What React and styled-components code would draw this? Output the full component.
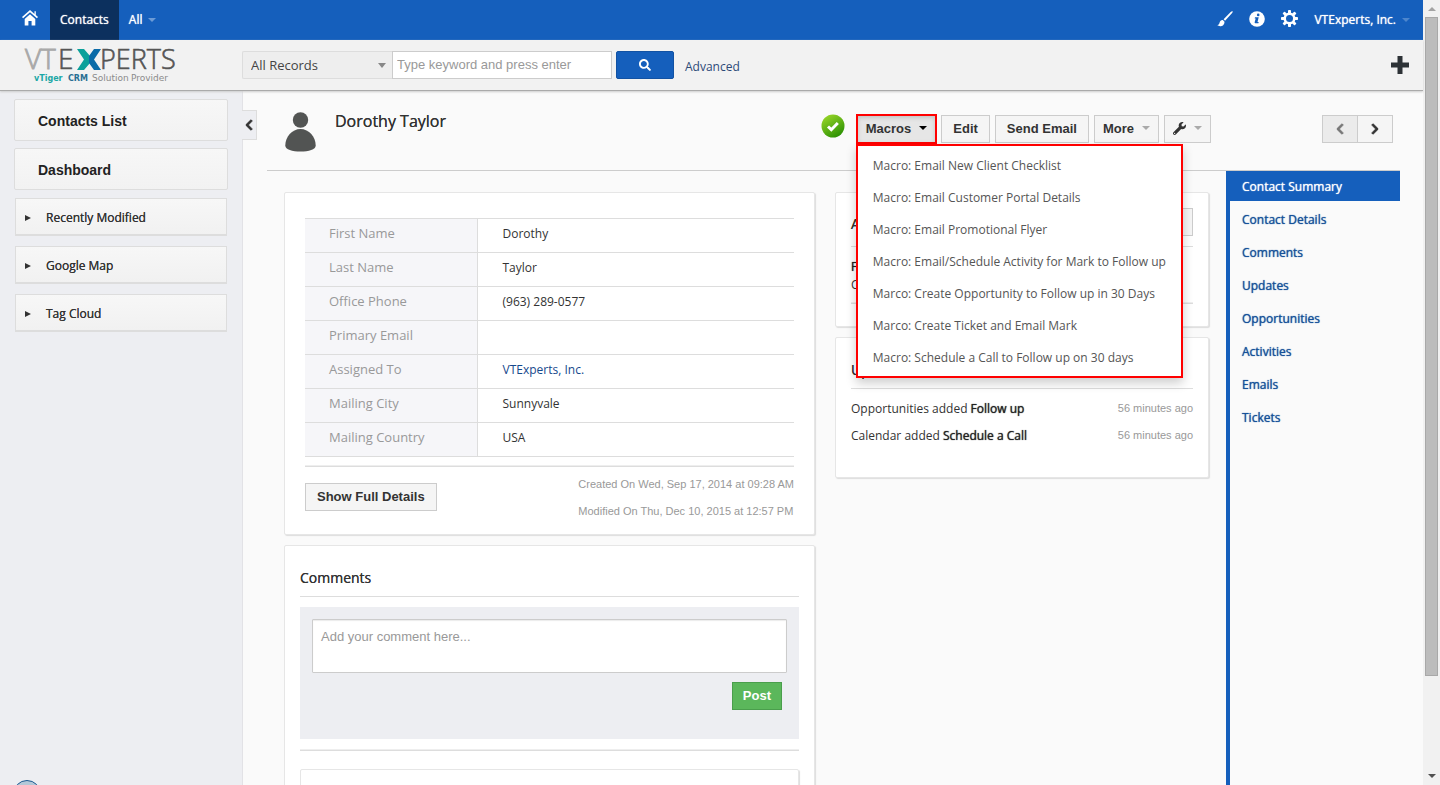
import styled, { createGlobalStyle, css } from "styled-components";
import { FaSearch, FaWrench, FaChevronLeft, FaChevronRight } from "react-icons/fa";

const macros = [
  "Macro: Email New Client Checklist",
  "Macro: Email Customer Portal Details",
  "Macro: Email Promotional Flyer",
  "Macro: Email/Schedule Activity for Mark to Follow up",
  "Marco: Create Opportunity to Follow up in 30 Days",
  "Marco: Create Ticket and Email Mark",
  "Macro: Schedule a Call to Follow up on 30 days",
];

const fields = [
  ["First Name", "Dorothy"],
  ["Last Name", "Taylor"],
  ["Office Phone", "(963) 289-0577"],
  ["Primary Email", ""],
  ["Assigned To", "VTExperts, Inc."],
  ["Mailing City", "Sunnyvale"],
  ["Mailing Country", "USA"],
];

const tabs = [
  "Contact Summary",
  "Contact Details",
  "Comments",
  "Updates",
  "Opportunities",
  "Activities",
  "Emails",
  "Tickets",
];

const updates = [
  ["Opportunities", "Follow up"],
  ["Calendar", "Schedule a Call"],
];

const HomeIcon = () => (
  <svg width="16" height="16" viewBox="0 0 16 16" fill="#fff">
    <path d="M8 0 0 7l1.100 1.200L8 2.300l6.900 5.900L16 7l-2.200-1.900V1.200h-1.300v2.700z" />
    <path d="M8 4.300 2.700 8.900v6.600h3.700V11h3.200v4.500h3.700V8.900z" />
  </svg>
);

const BrushIcon = () => (
  <svg width="16" height="16" viewBox="0 0 16 16" fill="#fff">
    <path d="M15.600.3c-.5-.4-1.300.1-1.900.7L6.600 8.300l1.500 1.500 6.800-7.500c.5-.6 1.100-1.600.7-2z" />
    <path d="M5.800 9c-1.500-.3-2.800.7-3.100 2.300-.3 1.500-.9 2.500-2.400 3 2.200 1.600 7.300 1.200 7.200-3.600z" />
  </svg>
);

const InfoIcon = () => (
  <svg width="16" height="16" viewBox="0 0 16 16">
    <circle cx="8" cy="8" r="7.800" fill="#fff" />
    <circle cx="9.200" cy="3.900" r="1.300" fill="#155fbc" />
    <path d="M6 6.300h3.700L8.500 11h1.200l-.3 1.200H6.300c-.6 0-.8-.5-.6-1.100l1-3.700H5.700z" fill="#155fbc" />
  </svg>
);

const GearIcon = () => (
  <svg width="17" height="17" viewBox="0 0 17 17">
    <g fill="#fff">
      {[0, 45, 90, 135].map((angle) => (
        <rect key={angle} x="7" y="0" width="3" height="17" rx=".8" transform={`rotate(${angle} 8.500 8.500)`} />
      ))}
      <circle cx="8.500" cy="8.500" r="6" />
    </g>
    <circle cx="8.500" cy="8.500" r="3.500" fill="#155fbc" />
  </svg>
);

const PersonIcon = () => (
  <svg width="31" height="40" viewBox="0 0 31 40" fill="#525453">
    <circle cx="15.500" cy="8" r="7.700" />
    <path d="M15.500 17C7 17 .3 25 .3 33.500c0 4 7 6 15.200 6s15.200-2 15.200-6C30.700 25 24 17 15.500 17z" />
  </svg>
);

const CheckIcon = () => (
  <svg width="24" height="24" viewBox="0 0 24 24">
    <defs>
      <linearGradient id="ok" x1="0" y1="0" x2=".6" y2="1">
        <stop offset="0" stopColor="#a4dd2c" />
        <stop offset="1" stopColor="#2f9305" />
      </linearGradient>
    </defs>
    <circle cx="12" cy="12" r="11.500" fill="url(#ok)" />
    <path d="m7 12.500 3.300 3.200L16.800 9" fill="none" stroke="#fff" strokeWidth="3" />
  </svg>
);

const PlusIcon = () => (
  <svg width="18" height="18" viewBox="0 0 18 18" fill="#2d3236">
    <path d="M6.500 0h5v6.500H18v5h-6.500V18h-5v-6.500H0v-5h6.500z" />
  </svg>
);

const Logo = () => (
  <svg width="156" height="48" viewBox="0 0 156 48" role="img" aria-label="VTExperts">
    <g fontFamily="'Open Sans', sans-serif" fontSize="28" fontWeight="300">
      <g fill="#a9a9a9" stroke="#a9a9a9" strokeWidth=".9">
        <text x="1" y="28">V</text>
        <text x="17" y="28">T</text>
      </g>
      <g fill="#555" stroke="#555" strokeWidth=".6">
        <text x="34" y="28">E</text>
        <text x="76" y="28" fontSize="27">PERTS</text>
      </g>
    </g>
    <path d="M53 8h7l6 7v7l-6 7h-7l7-10.500z" fill="#0ba09a" />
    <path d="M77 8h-7l-5 7v7l5 7h7l-7-10.500z" fill="#0b6ba8" />
    <g fontFamily="'DejaVu Sans', sans-serif" fontSize="8">
      <text x="10" y="40" fill="#1ba7a5" fontWeight="700">vTiger</text>
      <text x="44" y="40" fill="#2a6f94" fontWeight="700">CRM</text>
      <text x="68" y="40" fill="#8b8b8b" fontSize="9">Solution</text>
      <text x="107" y="40" fill="#8b8b8b" fontSize="9">Provider</text>
    </g>
  </svg>
);

const App = () => {
  return (
    <>
      <GlobalStyle />
      <Screen>
        <Page>
          <TopBar>
            <NavLink href="#home" aria-label="Home" $home>
              <HomeIcon />
            </NavLink>
            <NavLink href="#contacts" $active>
              Contacts
            </NavLink>
            <NavLink href="#all">
              All <Caret $color="#6c9bd6" />
            </NavLink>
            <TopTools>
              <IconLink href="#theme" aria-label="Theme">
                <BrushIcon />
              </IconLink>
              <IconLink href="#info" aria-label="Info">
                <InfoIcon />
              </IconLink>
              <IconLink href="#settings" aria-label="Settings">
                <GearIcon />
              </IconLink>
              <UserLink href="#user">
                VTExperts, Inc. <Caret $color="#4d86cd" />
              </UserLink>
            </TopTools>
          </TopBar>

          <SearchBar>
            <LogoBox>
              <Logo />
            </LogoBox>
            <SelectWrap>
              <Select aria-label="Search module">
                <option>All Records</option>
              </Select>
            </SelectWrap>
            <SearchInput aria-label="Keyword" placeholder="Type keyword and press enter" />
            <SearchButton aria-label="Search">
              <FaSearch />
            </SearchButton>
            <AdvancedLink href="#advanced">Advanced</AdvancedLink>
            <AddButton aria-label="Quick create">
              <PlusIcon />
            </AddButton>
          </SearchBar>

          <Body>
            <Sidebar>
              <SideLink href="#list">Contacts List</SideLink>
              <SideLink href="#dashboard">Dashboard</SideLink>
              <Widgets>
                <Widget>Recently Modified</Widget>
                <Widget>Google Map</Widget>
                <Widget>Tag Cloud</Widget>
              </Widgets>
              <StatusDot />
            </Sidebar>

            <Main>
              <Collapse aria-label="Collapse sidebar">
                <FaChevronLeft />
              </Collapse>
              <RecordHeader>
                <PersonIcon />
                <h1>Dorothy Taylor</h1>
                <Actions>
                  <CheckIcon />
                  <MenuWrap>
                    <MacroButton aria-expanded="true">
                      Macros <Caret $color="#000" />
                    </MacroButton>
                    <Menu>
                      {macros.map((item) => (
                        <li key={item}>
                          <a href="#macro">{item}</a>
                        </li>
                      ))}
                    </Menu>
                  </MenuWrap>
                  <Button>Edit</Button>
                  <Button>Send Email</Button>
                  <Button $dropdown>
                    More <Caret $color="#aaa" />
                  </Button>
                  <Button aria-label="Tools" $dropdown>
                    <FaWrench />
                    <Caret $color="#aaa" />
                  </Button>
                </Actions>
                <Pager>
                  <PagerButton aria-label="Previous" disabled>
                    <FaChevronLeft />
                  </PagerButton>
                  <PagerButton aria-label="Next">
                    <FaChevronRight />
                  </PagerButton>
                </Pager>
              </RecordHeader>

              <Record>
                <Columns>
                  <Column>
                    <Panel $wide>
                      <FieldTable>
                        <tbody>
                          {fields.map(([label, value]) => (
                            <tr key={label}>
                              <th scope="row">{label}</th>
                              <td>
                                {label === "Assigned To" ? <a href="#owner">{value}</a> : value}
                              </td>
                            </tr>
                          ))}
                        </tbody>
                      </FieldTable>
                      <Rule />
                      <PanelFooter>
                        <Button>Show Full Details</Button>
                        <Stamps>
                          <p>Created On Wed, Sep 17, 2014 at 09:28 AM</p>
                          <p>Modified On Thu, Dec 10, 2015 at 12:57 PM</p>
                        </Stamps>
                      </PanelFooter>
                    </Panel>

                    <Panel>
                      <PanelTitle>
                        <h2>Comments</h2>
                      </PanelTitle>
                      <CommentBox>
                        <CommentInput aria-label="Comment" placeholder="Add your comment here..." />
                        <PostButton>Post</PostButton>
                      </CommentBox>
                      <Rule />
                      <CommentList />
                    </Panel>
                  </Column>

                  <Column>
                    <Panel>
                      <PanelTitle $withButton>
                        <h2>Activities</h2>
                        <Button>Add</Button>
                      </PanelTitle>
                      <Activity>
                        <strong>Follow up</strong>
                        <span>Calendar</span>
                      </Activity>
                      <Rule />
                    </Panel>
                    <Panel>
                      <PanelTitle>
                        <h2>Updates</h2>
                      </PanelTitle>
                      <UpdateList>
                        {updates.map(([module, name]) => (
                          <li key={module}>
                            <span>
                              {module} added <strong>{name}</strong>
                            </span>
                            <time>56 minutes ago</time>
                          </li>
                        ))}
                      </UpdateList>
                    </Panel>
                  </Column>
                </Columns>

                <Tabs>
                  {tabs.map((tab, index) => (
                    <Tab key={tab} href="#tab" $active={index === 0}>
                      {tab}
                    </Tab>
                  ))}
                </Tabs>
              </Record>
            </Main>
          </Body>
        </Page>
        <ScrollTrack>
          <Caret $color="#a3a3a3" $up />
          <ScrollThumb />
          <Caret $color="#505050" />
        </ScrollTrack>
      </Screen>
    </>
  );
};

/* thickens the regular face without changing its widths */
const heavier = css`
  font-weight: 400;
  text-shadow: 0 0 1px currentColor;
`;

const GlobalStyle = createGlobalStyle`
  * {
    box-sizing: border-box;
  }
  body {
    margin: 0;
    background: #fafafa;
    color: #333;
    font-family: "Open Sans", sans-serif;
    font-size: 12px;
    line-height: 20px;
  }
  h1, h2, p, ul {
    margin: 0;
    padding: 0;
    font-weight: 400;
  }
  h1, h2 {
    text-shadow: 0 0 0 currentColor;
  }
  ul {
    list-style: none;
  }
  a {
    color: #15488c;
    text-decoration: none;
  }
  strong {
    color: #222;
    ${heavier}
  }
  svg {
    flex: none;
    display: block;
    overflow: visible;
  }
`;

const Screen = styled.div`
  display: flex;
  height: 100vh;
  overflow: hidden;
`;

const Page = styled.div`
  flex: 1;
  min-width: 0;
  display: flex;
  flex-direction: column;
`;

const Caret = styled.i`
  display: inline-block;
  border: 4px solid transparent;
  border-bottom-width: 0;
  border-top-color: ${(props) => props.$color};
  ${(props) =>
    props.$up &&
    css`
      border-width: 0 4px 4px;
      border-bottom-color: ${props.$color};
    `}
`;

const TopBar = styled.nav`
  flex: none;
  display: flex;
  height: 40px;
  padding-left: 10px;
  background: #155fbc;
`;

const NavLink = styled.a`
  display: flex;
  align-items: center;
  gap: 6px;
  padding: 0 10px;
  color: #fff;
  background: ${(props) => (props.$active ? "#0c305e" : "transparent")};
  ${heavier}
  ${(props) =>
    props.$home &&
    css`
      width: 40px;
      padding: 0 12px 4px;
    `}
`;

const TopTools = styled.div`
  display: flex;
  align-items: center;
  gap: 16px;
  margin-left: auto;
  padding-right: 13px;
`;

const IconLink = styled.a`
  padding-bottom: 3px;
`;

const UserLink = styled(NavLink)`
  padding: 0;
`;

const SearchBar = styled.header`
  flex: none;
  position: relative;
  display: flex;
  align-items: center;
  height: 51px;
  padding-right: 14px;
  background: #f2f2f2;
  border-bottom: 1px solid #aaa;
  box-shadow: 0 1px 2px #ccc;
`;

const LogoBox = styled.div`
  width: 242px;
  padding-left: 24px;
`;

const SelectWrap = styled.div`
  position: relative;
  &::after {
    content: "";
    position: absolute;
    right: 6px;
    top: 12px;
    border: 4px solid transparent;
    border-top: 5px solid #888;
    pointer-events: none;
  }
`;

const Select = styled.select`
  appearance: none;
  display: block;
  width: 150px;
  height: 28px;
  padding: 0 8px;
  border: 1px solid #ddd;
  border-right: 0;
  border-radius: 2px 0 0 2px;
  background: #eee;
  color: #444;
  font: 13px "Open Sans", sans-serif;
`;

const SearchInput = styled.input`
  width: 220px;
  height: 28px;
  padding: 0 4px 2px;
  border: 1px solid #ccc;
  font: 13px "Liberation Sans", sans-serif;
  &::placeholder {
    color: #999;
  }
`;

const SearchButton = styled.button`
  display: grid;
  place-items: center;
  width: 58px;
  height: 28px;
  margin: 0 11px 0 4px;
  border: 1px solid #1252a3;
  border-radius: 2px;
  background: #155fbc;
  color: #fff;
  font-size: 12px;
`;

const AdvancedLink = styled.a`
  padding-top: 3px;
  color: #2d4a78;
`;

const AddButton = styled.button`
  margin-left: auto;
  padding: 0;
  border: 0;
  background: none;
`;

const Body = styled.div`
  flex: 1;
  min-height: 0;
  display: flex;
`;

const Sidebar = styled.aside`
  flex: none;
  display: flex;
  flex-direction: column;
  gap: 7px;
  width: 243px;
  padding: 8px 14px 0 14px;
  border-right: 1px solid #e2e2e6;
  background: #edeef2;
`;

const SideLink = styled.a`
  height: 42px;
  padding: 0 23px;
  border: 1px solid #ddd;
  border-radius: 2px;
  background: linear-gradient(#f7f7f7, #f2f2f2);
  color: #222;
  font: bold 14px/42px "Liberation Sans", sans-serif;
`;

const Widgets = styled.div`
  display: flex;
  flex-direction: column;
  gap: 10px;
  padding: 1px 1px 0;
`;

const Widget = styled.button`
  display: flex;
  align-items: center;
  gap: 15px;
  height: 38px;
  padding: 1px 9px 0;
  border: 1px solid #ddd;
  border-bottom-width: 2px;
  background: linear-gradient(#f7f7f7, #f1f1f1);
  color: #333;
  font: 12px "Open Sans", sans-serif;
  text-shadow: 0 0 0 currentColor;
  &::before {
    content: "";
    margin-top: 2px;
    border: 3px solid transparent;
    border-left: 6px solid #333;
    border-right: 0;
  }
`;

const StatusDot = styled.div`
  flex: none;
  align-self: flex-start;
  width: 28px;
  height: 28px;
  margin: auto 0 -23px -1px;
  border: 1px solid #1e5a91;
  border-radius: 50%;
  background: #b3c8d8;
`;

const Main = styled.main`
  flex: 1;
  min-width: 0;
  position: relative;
  display: flex;
  flex-direction: column;
  padding: 0 23px 0 24px;
`;

/* handle that hangs over the sidebar edge */
const Collapse = styled.button`
  position: absolute;
  left: -1px;
  top: 19px;
  display: grid;
  place-items: center;
  width: 15px;
  height: 30px;
  padding: 0;
  border: 1px solid #ddd;
  border-left: 0;
  background: #edeef2;
  color: #333;
  font-size: 12px;
  svg {
    stroke: currentColor;
    stroke-width: 40px;
  }
`;

const RecordHeader = styled.div`
  flex: none;
  display: flex;
  align-items: flex-start;
  gap: 19px;
  height: 80px;
  padding: 21px 7px 0 18px;
  border-bottom: 1px solid #ccc;
  h1 {
    font-size: 16px;
    line-height: 18px;
  }
`;

const Actions = styled.div`
  display: flex;
  gap: 5px;
  margin: 3px 0 0 auto;
  > svg {
    margin: -1px 7px 0 0;
  }
`;

const buttonLook = css`
  display: flex;
  align-items: center;
  gap: 8px;
  height: 28px;
  padding: 0 11px 2px;
  border: 1px solid #ccc;
  background: #f5f5f5;
  color: #333;
  font: bold 13px "Liberation Sans", sans-serif;
`;

const Button = styled.button`
  ${buttonLook}
  ${(props) =>
    props.$dropdown &&
    css`
      padding: 0 8px 2px;
    `}
`;

const MenuWrap = styled.div`
  position: relative;
`;

const MacroButton = styled.button`
  ${buttonLook}
  padding: 0 8px 2px;
  border-color: #bbb;
  background: #e6e6e6;
  box-shadow: inset 0 2px 4px rgba(0, 0, 0, 0.15);
  outline: 2px solid #f00;
  outline-offset: -1px;
`;

const Menu = styled.ul`
  position: absolute;
  z-index: 5;
  top: 29px;
  left: -1px;
  padding: 4px 0 2px;
  border: 2px solid #f00;
  background: #fff;
  box-shadow: 0 5px 10px rgba(0, 0, 0, 0.2);
  a {
    display: block;
    padding: 6px 15px;
    color: #555;
    white-space: nowrap;
  }
`;

const Pager = styled.div`
  display: flex;
  margin: 3px 0 0 92px;
`;

const PagerButton = styled(Button)`
  justify-content: center;
  width: 36px;
  padding: 0;
  font-size: 12px;
  svg {
    stroke: currentColor;
    stroke-width: 40px;
  }
  &:disabled {
    width: 35px;
    border-right: 0;
    background: #ebebeb;
    color: #777;
  }
`;

const Record = styled.div`
  flex: 1;
  min-height: 0;
  display: flex;
`;

const Columns = styled.div`
  flex: 1;
  display: grid;
  grid-template-columns: 531fr 374fr;
  align-items: start;
  gap: 20px;
  padding: 21px 17px 0;
`;

const Column = styled.div`
  display: flex;
  flex-direction: column;
  gap: 10px;
`;

const Panel = styled.section`
  padding: ${(props) => (props.$wide ? "25px 20px 6px" : "15px 15px 22px")};
  border: 1px solid #e6e6e6;
  border-radius: 2px;
  background: #fff;
  box-shadow: 1px 1px 1px #ddd;
`;

const FieldTable = styled.table`
  width: 100%;
  border-collapse: collapse;
  border-top: 1px solid #ddd;
  tr {
    height: 34px;
    border-bottom: 1px solid #ddd;
  }
  th {
    width: 172px;
    padding: 0 24px 5px;
    border-right: 1px solid #ddd;
    background: #f6f6f9;
    color: #999;
    font-size: 13px;
    font-weight: 400;
    text-align: left;
  }
  td {
    padding: 0 25px 3px;
  }
`;

const Rule = styled.hr`
  width: 100%;
  height: 2px;
  margin: 8px 0 0;
  border: 0;
  border-top: 1px solid #eee;
  border-bottom: 1px solid #ddd;
`;

const PanelFooter = styled.div`
  display: flex;
  justify-content: space-between;
  align-items: flex-start;
  padding-top: 16px;
`;

const Stamps = styled.div`
  margin-top: -9px;
  color: #999;
  font: 11px/20px "Liberation Sans", sans-serif;
  p {
    margin-bottom: 7px;
  }
`;

const PanelTitle = styled.div`
  display: flex;
  align-items: center;
  justify-content: space-between;
  height: ${(props) => (props.$withButton ? 39 : 36)}px;
  padding-bottom: ${(props) => (props.$withButton ? 10 : 6)}px;
  border-bottom: 1px solid #ddd;
  h2 {
    padding-top: 4px;
    font-size: 14px;
  }
`;

const CommentBox = styled.div`
  display: flex;
  flex-direction: column;
  align-items: flex-end;
  gap: 9px;
  height: 132px;
  margin: 10px 0;
  padding: 12px;
  background: #edeef2;
  + ${Rule} {
    margin-top: 0;
  }
`;

const CommentInput = styled.textarea`
  width: 100%;
  height: 54px;
  padding: 9px 8px;
  border: 1px solid #ccc;
  border-radius: 1px;
  box-shadow: inset 0 1px 1px rgba(0, 0, 0, 0.08);
  resize: none;
  font: 13px "Liberation Sans", sans-serif;
  &::placeholder {
    color: #999;
  }
`;

const PostButton = styled(Button)`
  margin-right: 5px;
  padding: 0 10px 2px;
  border-color: #4a9e4c;
  background: #5bb75b;
  color: #fff;
`;

const CommentList = styled.div`
  height: 80px;
  margin-top: 18px;
  border: 1px solid #e6e6e6;
  border-radius: 2px;
  box-shadow: 1px 1px 1px #ddd;
`;

const Activity = styled.div`
  display: flex;
  flex-direction: column;
  margin-top: 11px;
  line-height: 18px;
`;

const UpdateList = styled.ul`
  padding: 10px 0 2px;
  li {
    display: flex;
    justify-content: space-between;
    margin-bottom: 7px;
  }
  time {
    color: #999;
    font: 11px/18px "Liberation Sans", sans-serif;
  }
`;

const Tabs = styled.nav`
  flex: none;
  display: flex;
  flex-direction: column;
  gap: 3px;
  width: 174px;
  border-left: 4px solid #155fbc;
`;

const Tab = styled.a`
  padding: 6px 12px 4px;
  ${heavier}
  color: ${(props) => (props.$active ? "#fff" : "#155199")};
  background: ${(props) => (props.$active ? "#155fbc" : "transparent")};
`;

const ScrollTrack = styled.div`
  flex: none;
  display: flex;
  flex-direction: column;
  align-items: center;
  width: 17px;
  padding: 7px 0;
  background: #f1f1f1;
  > :last-child {
    margin-top: auto;
  }
`;

const ScrollThumb = styled.div`
  width: 13px;
  height: calc(86% - 4px);
  margin-top: 6px;
  border: 1px solid #a8a8a8;
  background: #bcbcbc;
`;

export default App;
